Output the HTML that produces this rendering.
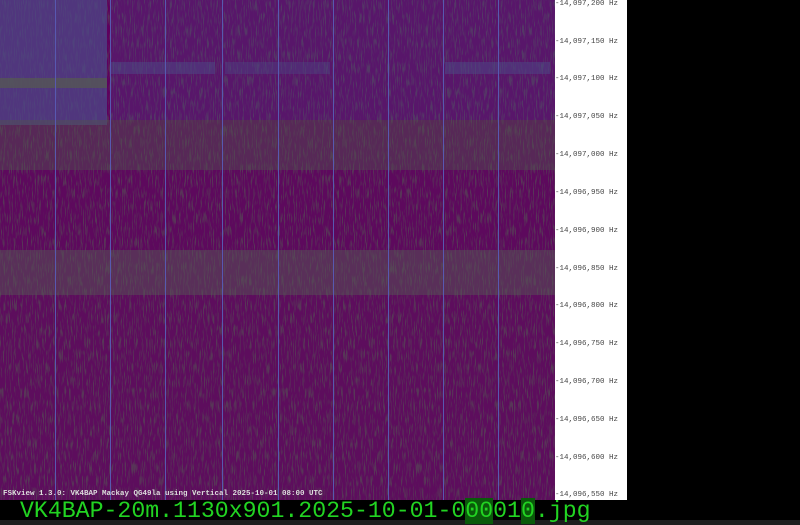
<!DOCTYPE html>
<html><head><meta charset="utf-8"><style>
html,body{margin:0;padding:0;background:#000;width:800px;height:525px;overflow:hidden;position:relative}
.lab{position:absolute;left:555px;font:7.5px "Liberation Mono",monospace;color:#444;white-space:pre;line-height:8px}
.big{position:absolute;left:20px;top:498px;font:23.2px "Liberation Mono",monospace;color:#22d422;white-space:pre}
</style></head><body>
<svg width="555" height="500" style="position:absolute;left:0;top:0" xmlns="http://www.w3.org/2000/svg">
<defs>
<filter id="n" x="0" y="0" width="100%" height="100%" color-interpolation-filters="sRGB">
<feTurbulence type="fractalNoise" baseFrequency="0.9 0.08" numOctaves="2" seed="3"/>
<feColorMatrix type="matrix" values="0 0 0 0 0.33  0 0 0 0 0.33  0 0 0 0 0.33  0 0 0 6 -3.1"/>
</filter>
</defs>
<rect width="555" height="500" fill="#5e005e"/>
<rect width="555" height="500" filter="url(#n)" opacity="0.6"/>
<rect x="0" y="0" width="107" height="125" fill="#4c4888" opacity="0.75"/>
<rect x="0" y="78" width="107" height="10" fill="#555a50" opacity="0.7"/>
<rect x="110" y="0" width="445" height="120" fill="#4c4888" opacity="0.3"/>
<rect x="110" y="62" width="105" height="12" fill="#4c4888" opacity="0.5"/>
<rect x="225" y="62" width="105" height="12" fill="#4c4888" opacity="0.4"/>
<rect x="445" y="62" width="105" height="12" fill="#4c4888" opacity="0.5"/>
<rect x="0" y="120" width="555" height="50" fill="#505050" opacity="0.5"/>
<rect x="0" y="250" width="555" height="45" fill="#555" opacity="0.55"/>
<rect x="0" y="170" width="555" height="80" fill="#555" opacity="0.1"/>
<rect x="0" y="295" width="555" height="205" fill="#555" opacity="0.15"/>
<g fill="#5858b0">
<rect x="55" y="0" width="1" height="500"/><rect x="110" y="0" width="1" height="500"/>
<rect x="165" y="0" width="1" height="500"/><rect x="222" y="0" width="1" height="500"/>
<rect x="278" y="0" width="1" height="500"/><rect x="333" y="0" width="1" height="500"/>
<rect x="388" y="0" width="1" height="500"/><rect x="443" y="0" width="1" height="500"/>
<rect x="498" y="0" width="1" height="500"/>
</g>
<text x="3" y="495" font-family="Liberation Mono, monospace" font-size="7.5" font-weight="bold" fill="#ddd">FSKview 1.3.0: VK4BAP Mackay QG49la using Vertical 2025-10-01 08:00 UTC</text>
</svg>
<div style="position:absolute;left:555px;top:0;width:72px;height:500px;background:#fff"></div>
<div class="lab" style="top:0">-14,097,200 Hz</div>
<div class="lab" style="top:38px">-14,097,150 Hz</div>
<div class="lab" style="top:75px">-14,097,100 Hz</div>
<div class="lab" style="top:113px">-14,097,050 Hz</div>
<div class="lab" style="top:151px">-14,097,000 Hz</div>
<div class="lab" style="top:189px">-14,096,950 Hz</div>
<div class="lab" style="top:227px">-14,096,900 Hz</div>
<div class="lab" style="top:265px">-14,096,850 Hz</div>
<div class="lab" style="top:302px">-14,096,800 Hz</div>
<div class="lab" style="top:340px">-14,096,750 Hz</div>
<div class="lab" style="top:378px">-14,096,700 Hz</div>
<div class="lab" style="top:416px">-14,096,650 Hz</div>
<div class="lab" style="top:454px">-14,096,600 Hz</div>
<div class="lab" style="top:491px">-14,096,550 Hz</div>
<div style="position:absolute;left:0;top:520px;width:800px;height:5px;background:#1e1e1e"></div>
<div class="big">VK4BAP-20m.1130x901.2025-10-01-0<span style="background:#0a5a0a">0</span><span style="background:#0a5a0a">0</span>01<span style="background:#0a5a0a">0</span>.jpg</div>
</body></html>
